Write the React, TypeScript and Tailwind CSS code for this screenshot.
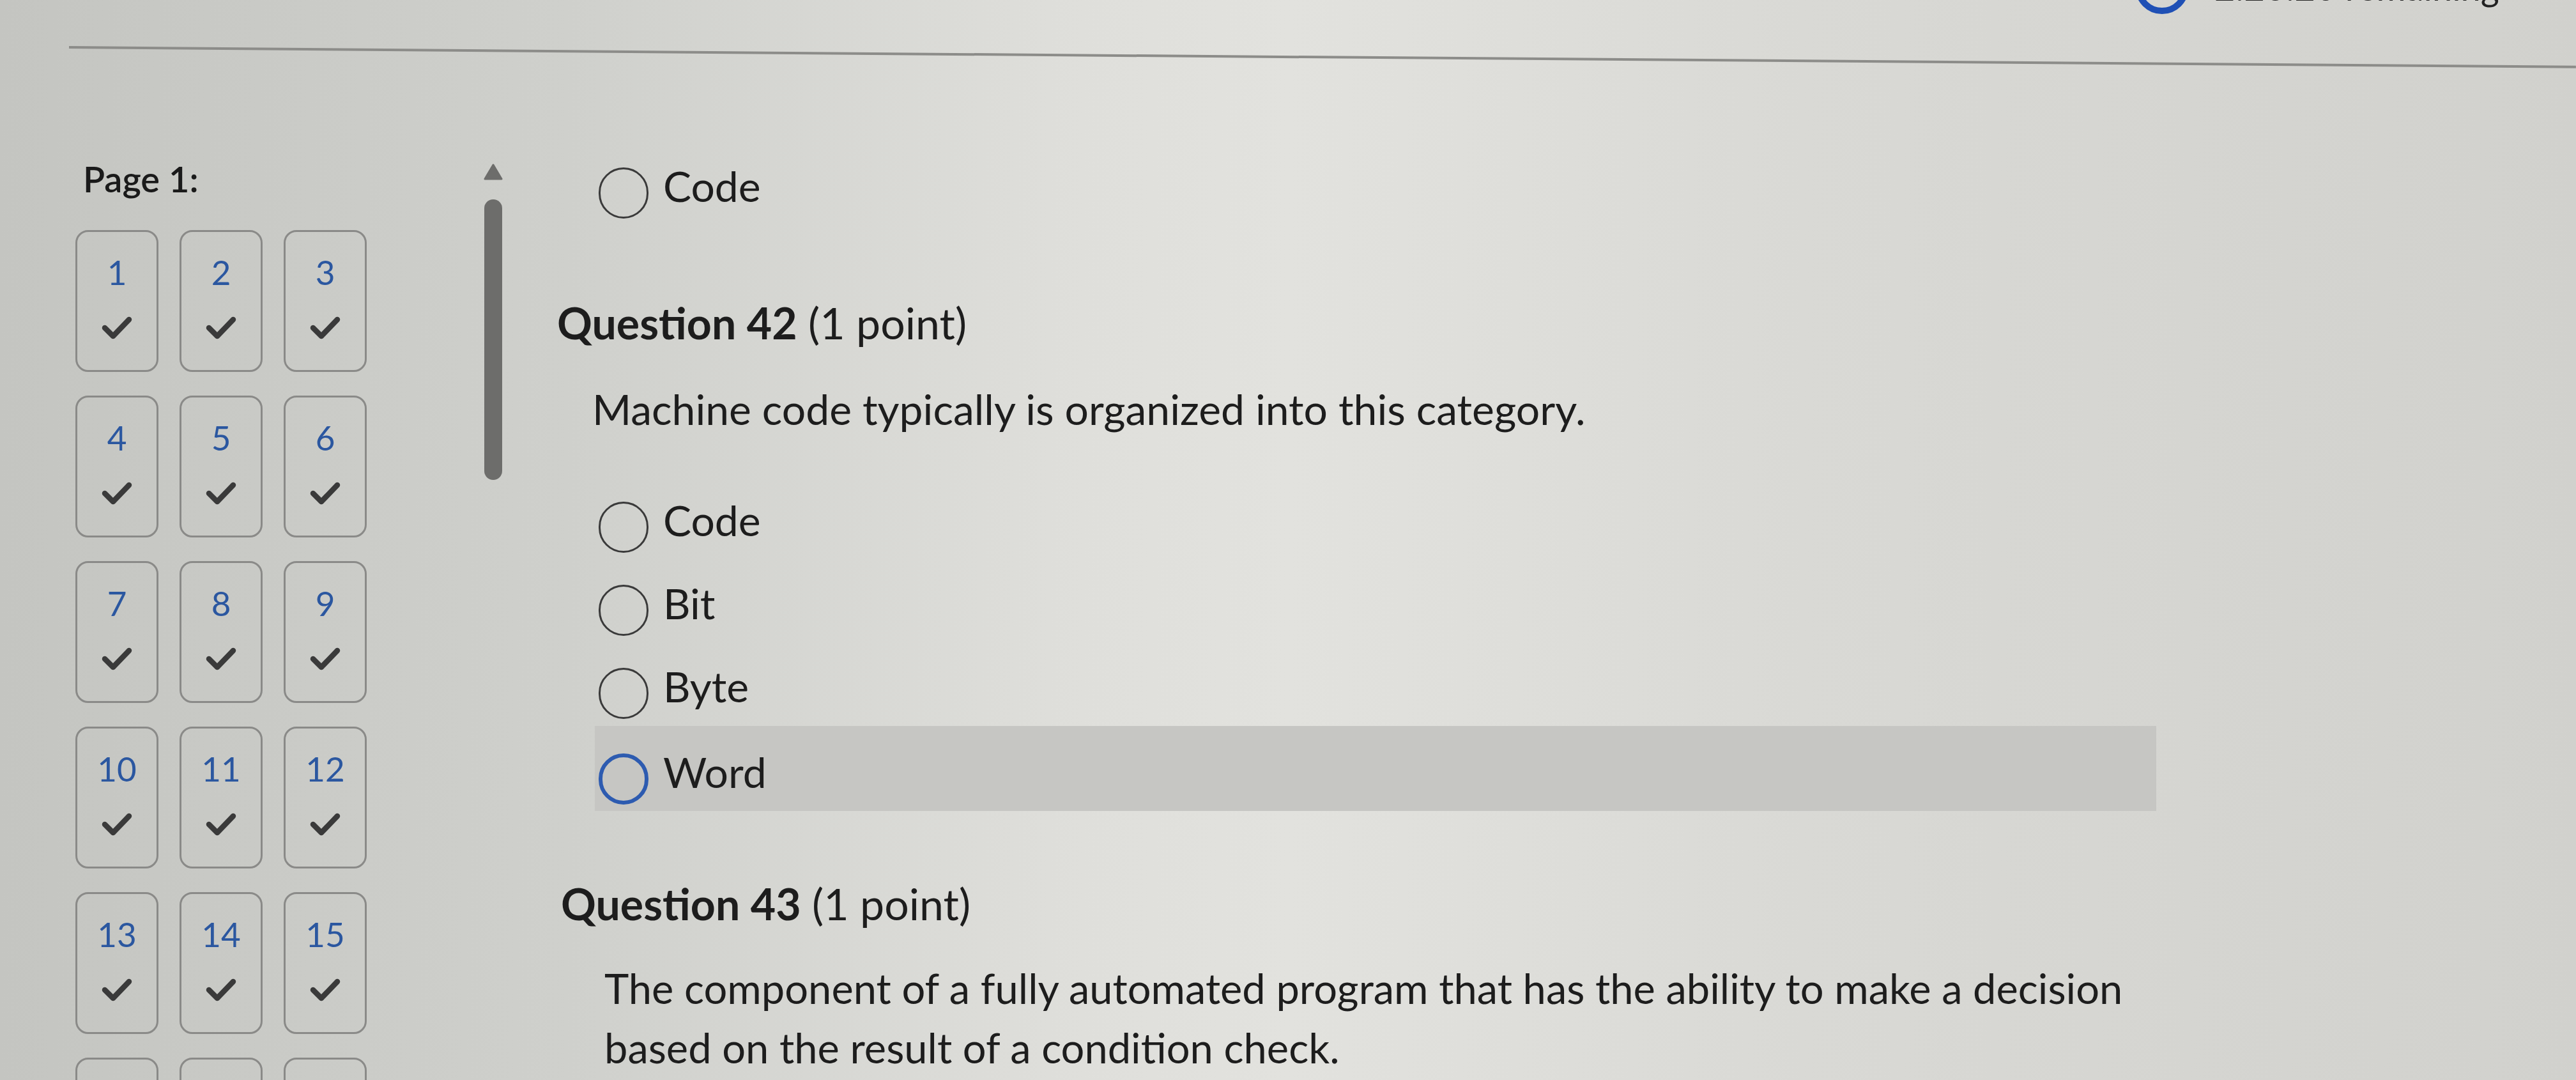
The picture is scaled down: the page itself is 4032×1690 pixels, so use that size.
import React from 'react'

const questions = Array.from({ length: 18 }, (_, i) => i + 1)

function Check() {
  return (
    <svg width="48" height="36" viewBox="0 0 48 36" fill="none" stroke="#3a3a3a" strokeWidth="8.5" strokeLinecap="round" strokeLinejoin="round">
      <path d="M5 18 L18 31 L43 5" />
    </svg>
  )
}

function Radio({ active = false }: { active?: boolean }) {
  return (
    <span
      className={
        active
          ? 'block h-[80px] w-[78px] shrink-0 rounded-full border-[6px] border-[#2d5bb0]'
          : 'block h-[80px] w-[78px] shrink-0 rounded-full border-[3px] border-[#3a3a3a]'
      }
    />
  )
}

function Option({ label }: { label: string }) {
  return (
    <div className="flex h-[130px] items-center gap-[23px] pl-[6px]">
      <Radio />
      <span className="mb-[22px] text-[66px] leading-none text-[#1d1d1d]">{label}</span>
    </div>
  )
}

export default function App() {
  return (
    <div className="h-[1690px] w-[4032px] overflow-hidden bg-[linear-gradient(90deg,#c4c5c1_0%,#cfd0cc_22%,#dfdfdb_42%,#e2e2de_50%,#d9d9d5_70%,#d1d1cd_100%)] font-['Lato','Noto_Sans',sans-serif] text-[#1d1d1d]">
      {/* top bar, mostly off-screen */}
      <div className="flex h-[72px] overflow-hidden">
        <div className="ml-auto mr-[120px] flex items-start gap-[40px]">
          <span className="-mt-[62px] block h-[84px] w-[84px] rounded-full border-[10px] border-[#1f50b5]" />
          <span className="-mt-[48px] text-[56px] leading-none text-[#222]">2:26:20 remaining</span>
        </div>
      </div>
      <div className="ml-[108px] h-[4px] origin-left rotate-[0.45deg] bg-[#8c8c89]" />

      <div className="flex">
        {/* question navigator */}
        <div className="flex w-[758px] flex-col pl-[118px]">
          <div className="ml-[12px] mt-[176px] text-[56px] font-semibold leading-none text-[#1a1a1a]">Page 1:</div>
          <div className="mt-[52px] grid grid-cols-[repeat(3,130px)] gap-x-[33px] gap-y-[37px]">
            {questions.map(n => (
              <div key={n} className="flex h-[222px] flex-col items-center rounded-[20px] border-[3px] border-[#8a8a88] pt-[36px]">
                <span className="text-[53px] leading-none text-[#2b57a0]">{n}</span>
                <div className="mt-[43px]">
                  <Check />
                </div>
              </div>
            ))}
          </div>
        </div>

        {/* scrollbar */}
        <div className="flex w-[28px] flex-col items-center">
          <svg className="mt-[180px]" width="30" height="26" viewBox="0 0 30 26">
            <path d="M15 2 L28 24 L2 24 Z" fill="#6d6d6b" stroke="#6d6d6b" strokeWidth="3" strokeLinejoin="round" />
          </svg>
          <div className="mt-[30px] h-[439px] w-[28px] rounded-full bg-[#6d6d6b]" />
        </div>

        {/* questions */}
        <div className="ml-[84px] flex flex-col">
          <div className="ml-[61px] mt-[161px] w-[2444px]">
            <Option label="Code" />
          </div>

          <h2 className="ml-[2px] mt-[104px] text-[68px] leading-none">
            <span className="font-bold">Question 42</span> (1 point)
          </h2>
          <p className="ml-[57px] mt-[68px] text-[66px] leading-none">Machine code typically is organized into this category.</p>

          <div className="ml-[61px] mt-[87px] w-[2444px]">
            <Option label="Code" />
            <Option label="Bit" />
            <Option label="Byte" />
            <div className="-mt-[14px] h-[133px] bg-[#c6c6c3] pl-[6px] pt-[43px]">
              <div className="flex h-[80px] items-center gap-[23px]">
                <Radio active />
                <span className="mb-[22px] text-[66px] leading-none text-[#1d1d1d]">Word</span>
              </div>
            </div>
          </div>

          <h2 className="ml-[8px] mt-[111px] text-[68px] leading-none">
            <span className="font-bold">Question 43</span> (1 point)
          </h2>
          <p className="ml-[76px] mt-[52px] max-w-[2440px] text-[65px] leading-[93px]">
            The component of a fully automated program that has the ability to make a decision based on the result of a condition check.
          </p>
        </div>
      </div>
    </div>
  )
}
